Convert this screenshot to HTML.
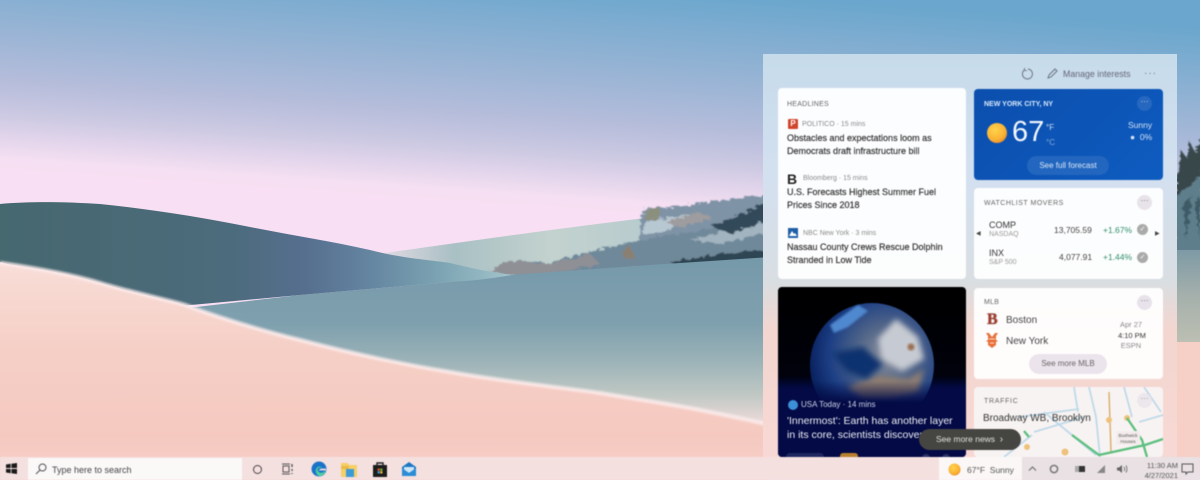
<!DOCTYPE html>
<html><head><meta charset="utf-8">
<style>
html,body{margin:0;padding:0;width:1200px;height:480px;overflow:hidden;background:#f6d5cd}
body{font-family:"Liberation Sans",sans-serif;position:relative}
.a{position:absolute;white-space:nowrap}
.card{position:absolute;background:rgba(255,255,255,.93);border-radius:4px}
#t{position:absolute;left:0;top:0;width:1200px;height:480px;filter:blur(.45px)}
.h{font-size:7px;letter-spacing:.25px;color:#666}
.src{font-size:7px;color:#8a8a8a}
.hd{font-size:9px;color:#333;line-height:12.6px;-webkit-text-stroke:.2px #333}
.dots{position:absolute;width:15px;height:15px;border-radius:50%;background:#e8e2ea;color:#666;font-size:8px;line-height:12px;text-align:center}
</style></head><body>
<svg width="1200" height="480" style="position:absolute;left:0;top:0" viewBox="0 0 1200 480">
<defs>
<linearGradient id="sky" gradientUnits="userSpaceOnUse" x1="385" y1="-30" x2="369" y2="200"><stop offset="0" stop-color="#6aa6cd"/><stop offset=".26" stop-color="#8ab0d2"/><stop offset=".43" stop-color="#a0b6d6"/><stop offset=".6" stop-color="#b6bddb"/><stop offset=".74" stop-color="#ccc9e2"/><stop offset=".85" stop-color="#e4d6ec"/><stop offset=".93" stop-color="#f5dff2"/><stop offset="1" stop-color="#f9dff3"/></linearGradient>
<linearGradient id="dark" gradientUnits="userSpaceOnUse" x1="0" y1="0" x2="510" y2="0"><stop offset="0" stop-color="#46686f"/><stop offset=".45" stop-color="#4c6b7c"/><stop offset=".6" stop-color="#566f8f"/><stop offset=".72" stop-color="#6484a0"/><stop offset=".86" stop-color="#7ba3b2"/><stop offset="1" stop-color="#a2c4cb"/></linearGradient>
<linearGradient id="mid" gradientUnits="userSpaceOnUse" x1="0" y1="258" x2="0" y2="425"><stop offset="0" stop-color="#7699aa"/><stop offset=".4" stop-color="#7fa0ae"/><stop offset=".62" stop-color="#9cb3b8"/><stop offset=".82" stop-color="#c0c8c4"/><stop offset="1" stop-color="#f0dcdb"/></linearGradient>
<linearGradient id="back" gradientUnits="userSpaceOnUse" x1="385" y1="0" x2="660" y2="0"><stop offset="0" stop-color="#dfd9e2"/><stop offset=".25" stop-color="#a9c0c4"/><stop offset=".6" stop-color="#c3d2ce"/><stop offset="1" stop-color="#b6cace"/></linearGradient>
<linearGradient id="pink" gradientUnits="userSpaceOnUse" x1="0" y1="263" x2="0" y2="480"><stop offset="0" stop-color="#f8ddd7"/><stop offset=".4" stop-color="#f5cfc6"/><stop offset=".8" stop-color="#f5c9c0"/><stop offset="1" stop-color="#f6d0c8"/></linearGradient>
<linearGradient id="rbot" x1="0" y1="0" x2="0" y2="1"><stop offset="0" stop-color="#7e9aa5"/><stop offset=".5" stop-color="#a5b0ac"/><stop offset="1" stop-color="#bcbfb2"/></linearGradient>
<radialGradient id="sun" cx=".4" cy=".35" r=".7"><stop offset="0" stop-color="#ffd24d"/><stop offset=".7" stop-color="#f9b233"/><stop offset="1" stop-color="#ee8a2d"/></radialGradient>
<radialGradient id="earth" cx=".62" cy=".42" r=".62"><stop offset="0" stop-color="#8f93a0"/><stop offset=".4" stop-color="#4f6488"/><stop offset=".75" stop-color="#1d3f85"/><stop offset="1" stop-color="#0a2362"/></radialGradient>
<linearGradient id="fade" x1="0" y1="0" x2="0" y2="1"><stop offset="0" stop-color="#030a45" stop-opacity="0"/><stop offset="1" stop-color="#030a45"/></linearGradient>
<linearGradient id="panel" x1="0" y1="0" x2="0" y2="1"><stop offset="0" stop-color="#c6dbea"/><stop offset=".3" stop-color="#d3e0f0"/><stop offset=".56" stop-color="#d8dee2"/><stop offset=".68" stop-color="#f3d6d0"/><stop offset="1" stop-color="#f8d8d4"/></linearGradient>
<filter id="b1"><feGaussianBlur stdDeviation="1"/></filter>
<filter id="b2"><feGaussianBlur stdDeviation="3"/></filter>
<filter id="rough" x="-5%" y="-10%" width="110%" height="120%"><feTurbulence type="fractalNoise" baseFrequency=".16 .26" numOctaves="3" seed="4" result="n"/><feDisplacementMap in="SourceGraphic" in2="n" scale="7"/><feGaussianBlur stdDeviation=".7"/></filter>
</defs>
<rect width="1200" height="480" fill="url(#sky)"/>
<!-- right edge scene -->
<g filter="url(#rough)">
<path d="M1175 192L1181 150L1187 158L1190 142L1195 152L1202 138V186L1175 204Z" fill="#39474a"/>
<path d="M1175 196L1202 176V254H1175Z" fill="#5d7e8a"/>
<path d="M1183 205L1192 195L1186 240ZM1195 200L1200 196V240Z" fill="#3e5a66"/>
</g>
<rect x="1177" y="250" width="23" height="92" fill="url(#rbot)"/>
<rect x="1177" y="342" width="23" height="125" fill="#f6cfc7"/>
<!-- back hill -->
<path d="M385 253C450 244 560 228 645 218L770 195V290H385Z" fill="url(#back)"/>
<!-- bushes -->
<g filter="url(#rough)">
<path d="M640 226L644 207L660 208L700 203L745 197L770 195V262L640 268L640 240Z" fill="#7f93a6"/>
<path d="M490 272L500 264L515 260L545 263L590 252L640 240L700 230L770 218V262L640 268L520 277Z" fill="#70899a"/>
<path d="M490 272L500 264L515 260L540 264L575 259L590 254L600 264L560 273L515 276Z" fill="#8f9096"/>
<path d="M645 222L690 214L665 232L642 234Z" fill="#b8c8d2"/>
<path d="M665 222L700 212L712 218L680 228Z" fill="#9e9c9e"/>
<path d="M690 240L720 232L770 222V232L720 244Z" fill="#a2b4c0"/>
<path d="M712 226L745 212L770 200V220L730 234Z" fill="#33495a"/>
<path d="M670 262L720 254L770 250V260L680 268Z" fill="#2e4452"/>
<path d="M645 208L660 208L660 220L645 220Z" fill="#8b8f7e"/>
<path d="M622 252L630 246L634 258L624 260Z" fill="#8b7f72"/>
</g>
<!-- middle land -->
<path d="M170 310L300 295L450 282L510 275L650 265L770 257V450H170Z" fill="url(#mid)"/>
<!-- dark hill -->
<path d="M0 204C30 201 70 202 100 204C150 209 200 217 250 227C290 235 330 241 370 250C400 258 430 260 450 263C470 268 490 272 512 275C490 279 470 281 450 282L300 295L180 306L100 290L0 262Z" fill="url(#dark)"/>
<!-- pink dune -->
<path d="M0 263C35 268 70 274 100 283C130 292 160 298 185 305C225 320 260 330 300 340C350 353 400 364 450 372C500 381 550 386 600 393C635 399 670 404 700 410C725 415 750 420 770 425V480H0Z" fill="url(#pink)"/>
<path d="M0 263C35 268 70 274 100 283C130 292 160 298 185 305C225 320 260 330 300 340C350 353 400 364 450 372C500 381 550 386 600 393C635 399 670 404 700 410C725 415 750 420 770 425" fill="none" stroke="#fbecec" stroke-width="4" filter="url(#b1)" opacity=".85"/>
<!-- panel -->
<rect x="763" y="54" width="414" height="404" fill="url(#panel)"/>
</svg>

<div id="t">
<!-- panel header -->
<svg class="a" style="left:1021px;top:67px" width="14" height="14" viewBox="0 0 14 14"><path d="M4 2.6A5 5 0 1 0 7 2" fill="none" stroke="#6b7480" stroke-width="1"/><path d="M3.5 1V3.600H6" fill="none" stroke="#6b7480" stroke-width=".8"/></svg>
<svg class="a" style="left:1046px;top:67px" width="13" height="13" viewBox="0 0 13 13"><path d="M2 11L3 8L9 2L11 4L5 10Z" fill="none" stroke="#6b7480" stroke-width="1"/></svg>
<div class="a" style="left:1063px;top:69px;font-size:8.8px;color:#667">Manage interests</div>
<div class="a" style="left:1144px;top:70px;font-size:10px;letter-spacing:1px;color:#778;line-height:8px">···</div>

<!-- headlines -->
<div class="card" style="left:778px;top:88px;width:188px;height:191px"></div>
<div class="a h" style="left:787px;top:101px">HEADLINES</div>
<div class="a" style="left:788px;top:119px;width:10px;height:10px;background:#d0452c;border-radius:1px;color:#fff;font-size:8px;line-height:10px;text-align:center;font-weight:700">P</div>
<div class="a src" style="left:802px;top:121px">POLITICO · 15 mins</div>
<div class="a hd" style="left:787px;top:132px">Obstacles and expectations loom as<br>Democrats draft infrastructure bill</div>
<div class="a" style="left:787px;top:171px;font-size:14px;font-weight:700;color:#222">B</div>
<div class="a src" style="left:803px;top:175px">Bloomberg · 15 mins</div>
<div class="a hd" style="left:787px;top:186px">U.S. Forecasts Highest Summer Fuel<br>Prices Since 2018</div>
<svg class="a" style="left:788px;top:228px" width="10" height="10"><rect width="10" height="10" fill="#1f5fa8"/><path d="M1 8L4 3L6 6L7 5L9 8Z" fill="#fff"/></svg>
<div class="a src" style="left:803px;top:230px">NBC New York · 3 mins</div>
<div class="a hd" style="left:787px;top:241px">Nassau County Crews Rescue Dolphin<br>Stranded in Low Tide</div>

<!-- weather -->
<div class="card" style="left:974px;top:89px;width:189px;height:91px;background:linear-gradient(135deg,#0c4fae,#0c56b8 60%,#0f5cc0)"></div>
<div class="a" style="left:984px;top:101px;font-size:7px;font-weight:700;color:#d8e8fa">NEW YORK CITY, NY</div>
<div class="dots" style="left:1137px;top:96px;background:#2668bf;color:#dde">···</div>
<svg class="a" style="left:986px;top:122px" width="22" height="22"><circle cx="11" cy="11" r="10" fill="url(#sun)"/></svg>
<div class="a" style="left:1012px;top:116px;font-size:29px;color:#f2f7fd">67</div>
<div class="a" style="left:1046px;top:120px;font-size:8px;line-height:15px;color:#cfe0f5">°F<br><span style="opacity:.6">°C</span></div>
<div class="a" style="left:1128px;top:120px;font-size:8.5px;color:#d3e3f6">Sunny</div>
<div class="a" style="left:1130px;top:132px;font-size:8.5px;color:#d3e3f6">&#9679;&nbsp;&nbsp;0%</div>
<div class="a" style="left:1027px;top:156px;width:82px;height:19px;border-radius:10px;background:#2266bf;color:#dbe8f8;font-size:8px;line-height:19px;text-align:center">See full forecast</div>

<!-- watchlist -->
<div class="card" style="left:974px;top:188px;width:189px;height:91px"></div>
<div class="a h" style="left:984px;top:200px;letter-spacing:.5px">WATCHLIST MOVERS</div>
<div class="dots" style="left:1137px;top:195px">···</div>
<div class="a" style="left:976px;top:230px;font-size:6px;color:#444">◀</div>
<div class="a" style="left:1155px;top:230px;font-size:6px;color:#444">▶</div>
<div class="a" style="left:989px;top:220px;font-size:9px;color:#333">COMP</div>
<div class="a" style="left:989px;top:231px;font-size:7px;color:#999">NASDAQ</div>
<div class="a" style="left:1054px;top:225px;font-size:8.5px;color:#444">13,705.59</div>
<div class="a" style="left:1103px;top:225px;font-size:8.5px;color:#2f8f6b">+1.67%</div>
<div class="a" style="left:1137px;top:224px;width:11px;height:11px;border-radius:50%;background:#a9aaa9;color:#fff;font-size:7px;line-height:11px;text-align:center">✓</div>
<div class="a" style="left:989px;top:248px;font-size:9px;color:#333">INX</div>
<div class="a" style="left:989px;top:259px;font-size:7px;color:#999">S&amp;P 500</div>
<div class="a" style="left:1059px;top:252px;font-size:8.5px;color:#444">4,077.91</div>
<div class="a" style="left:1103px;top:252px;font-size:8.5px;color:#2f8f6b">+1.44%</div>
<div class="a" style="left:1137px;top:252px;width:11px;height:11px;border-radius:50%;background:#a9aaa9;color:#fff;font-size:7px;line-height:11px;text-align:center">✓</div>

<!-- news -->
<div class="card" style="left:778px;top:287px;width:188px;height:170px;background:linear-gradient(#000 0,#01020c 52%,#030a45 60%,#030a45 100%);overflow:hidden">
<svg class="a" style="left:0;top:0" width="188" height="170">
<circle cx="94" cy="78" r="62" fill="url(#earth)"/>
<path d="M52 38L80 18L90 24L70 40L56 46Z" fill="#4f88cf" filter="url(#b1)"/>
<path d="M100 52L118 32L140 50L146 72L124 84L104 72Z" fill="#c6cad2" filter="url(#b2)"/>
<path d="M70 100L100 88L130 92L146 82L140 105L112 112L85 112Z" fill="#8d7d72" filter="url(#b2)"/>
<path d="M54 66L85 60L105 78L88 92L68 84Z" fill="#10306f" filter="url(#b2)"/>
<circle cx="133" cy="60" r="3.500" fill="#9a6f52" filter="url(#b1)"/>
<rect x="0" y="94" width="188" height="22" fill="url(#fade)"/>
<rect x="0" y="116" width="188" height="54" fill="#030a45"/>
<rect x="8" y="166" width="38" height="8" rx="4" fill="#1f2760"/>
<rect x="62" y="166" width="18" height="6" rx="3" fill="#b9802e"/>
<circle cx="148" cy="171" r="4" fill="#2a3268"/><circle cx="168" cy="171" r="4" fill="#2a3268"/>
</svg>
</div>
<div class="a" style="left:788px;top:400px;width:10px;height:10px;border-radius:50%;background:#3d8fd8"></div>
<div class="a" style="left:801px;top:400px;font-size:8px;color:#ccd3e6">USA Today · 14 mins</div>
<div class="a" style="left:787px;top:414px;font-size:10.5px;line-height:14px;color:#eef0f6">'Innermost': Earth has another layer<br>in its core, scientists discover</div>

<!-- mlb -->
<div class="card" style="left:974px;top:288px;width:189px;height:91px"></div>
<div class="a h" style="left:984px;top:299px">MLB</div>
<div class="dots" style="left:1137px;top:295px">···</div>
<div class="a" style="left:987px;top:311px;font-family:'Liberation Serif',serif;font-size:16px;font-weight:700;color:#a83a2a;text-shadow:0 0 1px #333">B</div>
<div class="a" style="left:1006px;top:315px;font-size:10px;color:#444">Boston</div>
<svg class="a" style="left:985px;top:332px" width="14" height="17"><path d="M1 1L4 1L7 5L10 1L13 1L11 4L11 8L13 9L11 10L11 13L7 16L3 13L3 10L1 9L3 8L3 4Z" fill="#e8703a"/><path d="M4 7H10M5 11H9" stroke="#fff" stroke-width=".8"/></svg>
<div class="a" style="left:1006px;top:336px;font-size:10px;color:#444">New York</div>
<div class="a" style="left:1118px;top:320px;width:26px;text-align:center;font-size:7.5px;line-height:10.500px;color:#888">Apr 27<br><span style="color:#333">4:10 PM</span><br>ESPN</div>
<div class="a" style="left:1029px;top:354px;width:78px;height:20px;border-radius:10px;background:#ece4ec;color:#666;font-size:8px;line-height:20px;text-align:center">See more MLB</div>

<!-- traffic -->
<div class="card" style="left:974px;top:387px;width:189px;height:70px;overflow:hidden;background:#f8f3f3">
<svg class="a" style="left:0;top:0" width="189" height="70">
<g fill="none" stroke="#bfd9e8" stroke-width="1.800">
<path d="M30 70L58 48M70 25L122 68M45 30L105 22M115 0L122 30M122 30L126 70M150 0L158 30M170 0L187 25M165 35L189 28M60 45L110 30M100 0L104 25"/>
</g>
<path d="M135 5L137 65" stroke="#d9b070" stroke-width="1.500" fill="none"/>
<g fill="#eec27a"><circle cx="135" cy="33" r="3"/><circle cx="153" cy="31" r="3"/><circle cx="53" cy="60" r="3"/><circle cx="91" cy="65" r="3.500"/></g>
<g fill="none" stroke="#5cbf7e" stroke-width="2.300"><path d="M98 48L125 68L171 58L189 52M153 31L168 53L173 70M50 44L55 50"/></g>
<rect x="142" y="44" width="24" height="14" fill="#f4ecec"/>
<text x="154" y="50" font-size="4.500" text-anchor="middle" fill="#555">Bushwick</text>
<text x="154" y="56" font-size="4.500" text-anchor="middle" fill="#555">Houses</text>
</svg>
<div class="a h" style="left:10px;top:11px;letter-spacing:.7px">TRAFFIC</div>
<div class="a" style="left:9px;top:26px;font-size:10px;color:#333">Broadway WB, Brooklyn</div>
<div class="dots" style="left:163px;top:6px;opacity:.7">···</div>
</div>

<!-- see more news -->
<div class="a" style="left:919px;top:429px;width:102px;height:21px;border-radius:11px;background:#454541;color:#e0e0dc;font-size:8.5px;line-height:21px;padding-left:17px;box-sizing:border-box">See more news &nbsp;<span style="font-size:10px">›</span></div>

<!-- taskbar -->
<div class="a" style="left:0;top:457px;width:1200px;height:23px;background:#f5e0e0"></div>
<svg class="a" style="left:6px;top:463px" width="11" height="11"><path d="M0 1.500L4.700 .8V5H0ZM5.500 .7L11 0V5H5.500ZM0 6H4.700V10.200L0 9.500ZM5.500 6H11V11L5.500 10.300Z" fill="#1a1a1a"/></svg>
<div class="a" style="left:28px;top:458px;width:214px;height:22px;background:#fbf8f8"></div>
<svg class="a" style="left:35px;top:463px" width="12" height="12"><circle cx="7.500" cy="4.500" r="3.500" fill="none" stroke="#555"/><path d="M5 7L1 11" stroke="#555" stroke-width="1.100"/></svg>
<div class="a" style="left:52px;top:465px;font-size:9px;color:#444">Type here to search</div>
<div class="a" style="left:253px;top:465px;width:7px;height:7px;border:1.400px solid #444;border-radius:50%"></div>
<svg class="a" style="left:281px;top:463px" width="13" height="12"><path d="M1 1H9M1 11H9" stroke="#555"/><rect x="2" y="3" width="6" height="6" fill="none" stroke="#555"/><path d="M11 1V4M11 6V8M11 10V11" stroke="#555" stroke-width="1.400"/></svg>
<svg class="a" style="left:311px;top:461px" width="16" height="16" viewBox="0 0 16 16"><circle cx="8" cy="8" r="7.500" fill="#1b73c9"/><path d="M8 15A7 7 0 0 0 15 9C13 12 9 13 7 10C5 7 9 6 11 7C10 5 6 5 5 8C4 11 6 14 8 15Z" fill="#4fd0a0"/><path d="M11 7.500H15V9.500H8C8 8 10 7.500 11 7.500Z" fill="#f5e0e0" opacity=".9"/></svg>
<svg class="a" style="left:341px;top:462px" width="16" height="15"><path d="M0 1H7L8 3H16V15H0Z" fill="#f6cf66"/><rect x="5" y="7" width="8" height="8" fill="#3b9bd8"/><path d="M0 4H8V7H0Z" fill="#eab94a"/></svg>
<svg class="a" style="left:372px;top:461px" width="16" height="16"><path d="M5 4V2H11V4" fill="none" stroke="#222" stroke-width="1.400"/><rect x="1" y="4" width="14" height="12" fill="#1c1c1c"/><rect x="5.500" y="7.500" width="2.300" height="2.300" fill="#e2502c"/><rect x="8.200" y="7.500" width="2.300" height="2.300" fill="#6cb43a"/><rect x="5.500" y="10.200" width="2.300" height="2.300" fill="#2d9bdb"/><rect x="8.200" y="10.200" width="2.300" height="2.300" fill="#f1b82e"/></svg>
<svg class="a" style="left:401px;top:461px" width="16" height="16"><path d="M1 6L8 1L15 6V15H1Z" fill="#1c78c4"/><path d="M3 6H13V9L8 12L3 9Z" fill="#cfe6f6"/><path d="M1 7L8 12L15 7V15H1Z" fill="#2a8dd6"/></svg>

<!-- weather chip -->
<div class="a" style="left:939px;top:457px;width:83px;height:23px;background:#fbf7f6"></div>
<svg class="a" style="left:948px;top:463px" width="13" height="13"><circle cx="6.500" cy="6.500" r="6" fill="url(#sun)"/></svg>
<div class="a" style="left:967px;top:465px;font-size:8.500px;color:#555">67°F&nbsp; Sunny</div>
<div class="a" style="left:1022px;top:457px;width:178px;height:23px;background:#e9e1e4"></div>
<svg class="a" style="left:1028px;top:465px" width="9" height="7"><path d="M1 5.500L4.500 2L8 5.500" fill="none" stroke="#666"/></svg>
<svg class="a" style="left:1049px;top:464px" width="10" height="10"><circle cx="5" cy="5" r="3.600" fill="none" stroke="#777" stroke-width="1.500"/></svg>
<svg class="a" style="left:1074px;top:465px" width="12" height="8"><rect x="1" y="1" width="10" height="6" fill="#333"/><rect x="1" y="1" width="4" height="6" fill="#aaa"/></svg>
<svg class="a" style="left:1096px;top:464px" width="11" height="10"><path d="M1 9L9 1V9Z" fill="#888"/></svg>
<svg class="a" style="left:1116px;top:464px" width="12" height="10"><path d="M1 3.500H3L6 1V9L3 6.500H1Z" fill="#666"/><path d="M8 3Q9.500 5 8 7M10 1.500Q12 5 10 8.500" fill="none" stroke="#666" stroke-width=".8"/></svg>
<div class="a" style="left:1130px;top:461px;width:48px;text-align:right;font-size:7.500px;line-height:9.500px;color:#555">11:30 AM<br>4/27/2021</div>
<svg class="a" style="left:1181px;top:463px" width="13" height="12"><path d="M1 1H12V9H7L5 11V9H1Z" fill="none" stroke="#555"/></svg>
</div>
</body></html>
